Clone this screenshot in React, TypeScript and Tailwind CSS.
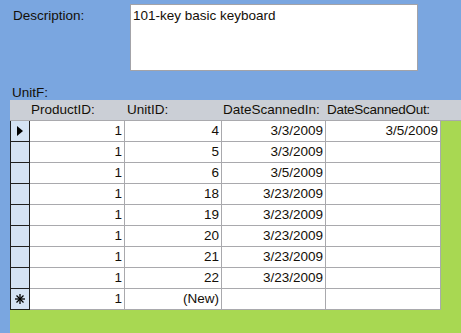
import React from "react";

const rows: [string, string, string, string][] = [
  ["1", "4", "3/3/2009", "3/5/2009"],
  ["1", "5", "3/3/2009", ""],
  ["1", "6", "3/5/2009", ""],
  ["1", "18", "3/23/2009", ""],
  ["1", "19", "3/23/2009", ""],
  ["1", "20", "3/23/2009", ""],
  ["1", "21", "3/23/2009", ""],
  ["1", "22", "3/23/2009", ""],
];

function Selector({ kind }: { kind: "arrow" | "new" | "none" }) {
  return (
    <div className="w-[20px] h-[21px] shrink-0 bg-[#d5e3f4] border-l border-r border-b border-[#1f1f1f] flex items-center justify-center">
      {kind === "arrow" && (
        <svg width="6" height="10" viewBox="0 0 6 10">
          <polygon points="0,0 6,5 0,10" fill="#000" />
        </svg>
      )}
      {kind === "new" && (
        <svg width="10" height="10" viewBox="0 0 10 10" stroke="#000" strokeWidth="1.3">
          <line x1="5" y1="0" x2="5" y2="10" />
          <line x1="0" y1="5" x2="10" y2="5" />
          <line x1="1.5" y1="1.5" x2="8.5" y2="8.5" />
          <line x1="8.5" y1="1.5" x2="1.5" y2="8.5" />
        </svg>
      )}
    </div>
  );
}

function Cell({ w, children }: { w: string; children?: React.ReactNode }) {
  return (
    <div
      className={`${w} h-[21px] shrink-0 bg-white border-r border-b border-[#a9a9ad] flex items-center justify-end pr-[2px]`}
    >
      {children}
    </div>
  );
}

export default function App() {
  return (
    <div
      className="w-[461px] h-[333px] bg-[#7aa6e0] flex flex-col text-[#140f08] text-[13.5px] leading-none overflow-hidden"
      style={{ fontFamily: '"Liberation Sans", Arial, sans-serif' }}
    >
      <div className="h-[100px] shrink-0 flex flex-col">
        <div className="flex pt-[4px]">
          <div className="w-[130px] pl-[13px] pt-[5px]">Description:</div>
          <div className="w-[288px] h-[67px] bg-white border border-[#a3a3a8] pl-[2px] pt-[4px]">
            101-key basic keyboard
          </div>
        </div>
        <div className="pl-[12px] mt-auto pb-[1px]">UnitF:</div>
      </div>
      <div className="ml-[10px] flex-1 flex flex-col">
        <div className="h-[21px] shrink-0 bg-[#cbcfd6] border-b border-[#a9a9ad] flex items-center">
          <div className="w-[20px] shrink-0" />
          <div className="w-[95px] pl-[1px]">ProductID:</div>
          <div className="w-[97px] pl-[2px]">UnitID:</div>
          <div className="w-[104px] pl-[1px]">DateScannedIn:</div>
          <div className="w-[115px] pl-[1px] tracking-[-0.3px]">DateScannedOut:</div>
        </div>
        <div className="flex-1 bg-[#a8d852]">
          <div className="w-[431px] flex flex-col">
            {rows.map((r, i) => (
              <div key={i} className="flex">
                <Selector kind={i === 0 ? "arrow" : "none"} />
                <Cell w="w-[95px]">{r[0]}</Cell>
                <Cell w="w-[97px]">{r[1]}</Cell>
                <Cell w="w-[104px]">{r[2]}</Cell>
                <Cell w="w-[115px]">{r[3]}</Cell>
              </div>
            ))}
            <div className="flex">
              <Selector kind="new" />
              <Cell w="w-[95px]">1</Cell>
              <Cell w="w-[97px]">(New)</Cell>
              <Cell w="w-[104px]" />
              <Cell w="w-[115px]" />
            </div>
          </div>
        </div>
      </div>
    </div>
  );
}
